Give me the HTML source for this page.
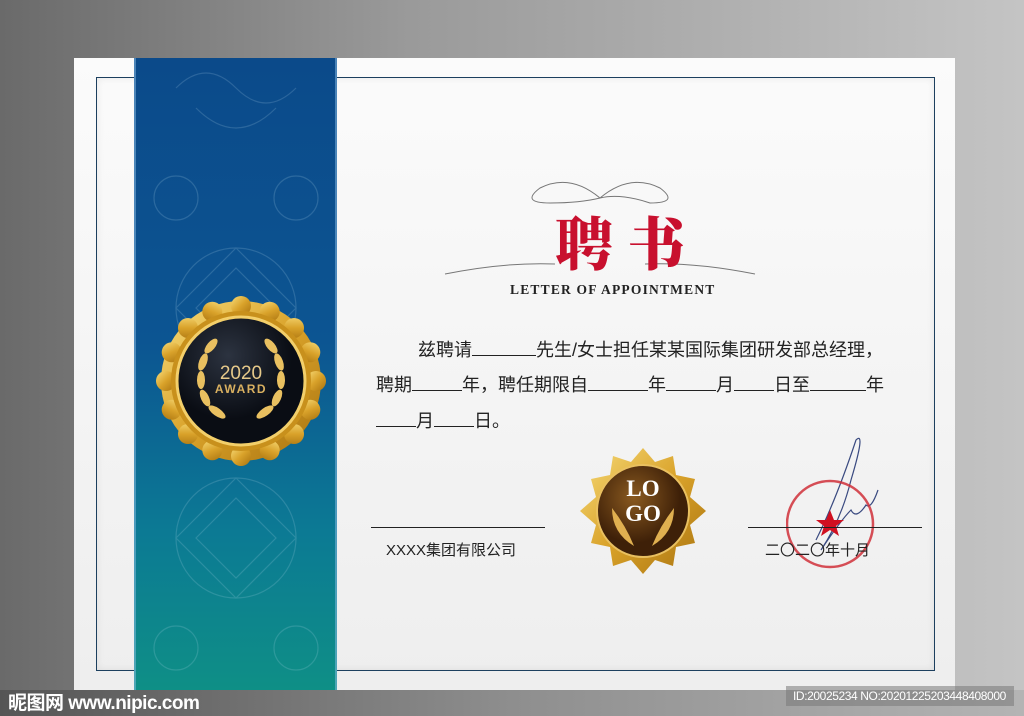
<!DOCTYPE html>
<html><head><meta charset="utf-8"><style>
*{margin:0;padding:0;box-sizing:border-box}
body{width:1024px;height:716px;overflow:hidden;position:relative;background:linear-gradient(90deg,#6a6a6a 0%,#9a9a9a 40%,#c4c4c4 100%);font-family:"Liberation Sans","Noto Sans CJK SC",sans-serif}
.paper{position:absolute;left:74px;top:58px;width:881px;height:632px;background:linear-gradient(180deg,#fbfbfb,#eeeeee)}
.border{position:absolute;left:96px;top:77px;width:839px;height:594px;border:1.5px solid #1c3f5e;box-shadow:inset 0 0 8px rgba(0,0,0,.08)}
.rib{position:absolute;left:134px;top:58px;width:203px;height:632px;background:linear-gradient(180deg,#0b4a8a 0%,#0c5592 45%,#0c7a94 75%,#0e8f86 100%);border-left:2px solid rgba(140,190,230,.5);border-right:2px solid rgba(140,190,230,.5)}
.bottom{position:absolute;left:0;top:690px;width:1024px;height:26px;background:linear-gradient(90deg,#555,#8e8e8e 50%,#b4b4b4)}
.t{position:absolute;color:#222;font-size:18px;white-space:nowrap}
u{text-decoration:none;display:inline-block;border-bottom:1px solid #222;height:14px;vertical-align:baseline}
</style></head><body>
<div class="paper"></div>
<div class="border"></div>
<div class="rib">
<svg width="199" height="632" style="opacity:.18">
<g fill="none" stroke="#bde" stroke-width="1.2">
<path d="M40 30 q30 -30 60 0 q30 30 60 0 M60 50 q40 40 80 0"/>
<circle cx="100" cy="250" r="60"/><path d="M100 190 l60 60 -60 60 -60 -60z M100 210 l40 40 -40 40 -40 -40z"/>
<circle cx="40" cy="140" r="22"/><circle cx="160" cy="140" r="22"/>
<circle cx="100" cy="480" r="60"/><path d="M100 420 l60 60 -60 60 -60 -60z M100 440 l40 40 -40 40 -40 -40z"/>
<circle cx="40" cy="590" r="22"/><circle cx="160" cy="590" r="22"/>
</g></svg>
</div>
<!-- award medal -->
<svg style="position:absolute;left:155px;top:296px" width="172" height="170" viewBox="0 0 172 170">
<defs><linearGradient id="g" x1="0" y1="0" x2="1" y2="1"><stop offset="0" stop-color="#f7dc7a"/><stop offset=".5" stop-color="#d9a22a"/><stop offset="1" stop-color="#a8720f"/></linearGradient>
<radialGradient id="b" cx=".4" cy=".3"><stop offset="0" stop-color="#2c3340"/><stop offset="1" stop-color="#0a0d14"/></radialGradient></defs>
<g fill="url(#g)"><circle cx="86" cy="85" r="80"/>
<g id="sc"><circle cx="86" cy="10" r="10"/><circle cx="86" cy="160" r="10"/><circle cx="11" cy="85" r="10"/><circle cx="161" cy="85" r="10"/></g>
<use href="#sc" transform="rotate(22.5 86 85)"/><use href="#sc" transform="rotate(45 86 85)"/><use href="#sc" transform="rotate(67.5 86 85)"/></g>
<circle cx="86" cy="85" r="70" fill="#c8901c"/>
<circle cx="86" cy="85" r="64" fill="url(#b)" stroke="#f3cf6a" stroke-width="3"/>
<g fill="#e9c060">
<ellipse cx="56" cy="50" rx="4" ry="9" transform="rotate(40 56 50)"/><ellipse cx="48" cy="66" rx="4" ry="9" transform="rotate(20 48 66)"/><ellipse cx="46" cy="84" rx="4" ry="9"/><ellipse cx="50" cy="102" rx="4" ry="9" transform="rotate(-25 50 102)"/><ellipse cx="62" cy="116" rx="4" ry="10" transform="rotate(-55 62 116)"/>
<ellipse cx="116" cy="50" rx="4" ry="9" transform="rotate(-40 116 50)"/><ellipse cx="124" cy="66" rx="4" ry="9" transform="rotate(-20 124 66)"/><ellipse cx="126" cy="84" rx="4" ry="9"/><ellipse cx="122" cy="102" rx="4" ry="9" transform="rotate(25 122 102)"/><ellipse cx="110" cy="116" rx="4" ry="10" transform="rotate(55 110 116)"/></g>
<text x="86" y="83" text-anchor="middle" fill="#e6c98a" font-size="19" font-family="Liberation Sans">2020</text>
<text x="86" y="97" text-anchor="middle" fill="#d9b060" font-size="12" font-weight="bold" letter-spacing="1.5" font-family="Liberation Sans">AWARD</text>
</svg>
<!-- title -->
<svg style="position:absolute;left:440px;top:168px" width="320" height="110">
<g fill="none" stroke="#777" stroke-width="1"><path d="M160 30 q-30 -25 -60 -10 q-20 15 10 15 q30 0 50 -5 q20 -5 50 5 q30 0 10 -15 q-30 -15 -60 10z"/><path d="M5 108 q60 -12 110 -10 M315 108 q-60 -12 -110 -10" transform="translate(0,-2)"/></g></svg>
<div class="t" style="left:555px;top:214px;font-family:'Liberation Serif','Noto Serif CJK SC',serif;font-size:58px;font-weight:900;color:#c8102e;letter-spacing:14px;line-height:64px">聘书</div>
<div class="t" style="left:510px;top:282px;font-family:'Liberation Serif',serif;font-size:13.5px;font-weight:bold;letter-spacing:1.2px">LETTER OF APPOINTMENT</div>
<div class="t" style="left:418px;top:336px">兹聘请<u style="width:64px"></u>先生/女士担任某某国际集团研发部总经理，</div>
<div class="t" style="left:376px;top:371px">聘期<u style="width:50px"></u>年，聘任期限自<u style="width:60px"></u>年<u style="width:50px"></u>月<u style="width:40px"></u>日至<u style="width:56px"></u>年</div>
<div class="t" style="left:376px;top:407px"><u style="width:40px"></u>月<u style="width:40px"></u>日。</div>
<div style="position:absolute;left:371px;top:527px;width:174px;border-top:1px solid #222"></div>
<div class="t" style="left:386px;top:539px;font-size:15px">XXXX集团有限公司</div>
<!-- logo seal -->
<svg style="position:absolute;left:580px;top:448px" width="126" height="126" viewBox="0 0 126 126">
<defs><radialGradient id="lb" cx=".4" cy=".35"><stop offset="0" stop-color="#8a5a20"/><stop offset="1" stop-color="#3e2008"/></radialGradient></defs>
<polygon fill="url(#g)" points="63,0 75,14 93,8 96,27 115,31 110,49 126,63 110,77 115,95 96,99 93,118 75,112 63,126 51,112 33,118 30,99 11,95 16,77 0,63 16,49 11,31 30,27 33,8 51,14"/>
<circle cx="63" cy="63" r="46" fill="url(#lb)" stroke="#e9c060" stroke-width="2"/>
<text x="63" y="48" text-anchor="middle" fill="#fff" font-size="23" font-weight="bold" font-family="Liberation Serif">LO</text>
<text x="63" y="73" text-anchor="middle" fill="#fff" font-size="23" font-weight="bold" font-family="Liberation Serif">GO</text>
<path d="M32 60 q0 25 22 38 q-8 -20 -22 -38z M94 60 q0 25 -22 38 q8 -20 22 -38z" fill="#e0b050"/>
</svg>
<!-- stamp -->
<svg style="position:absolute;left:786px;top:430px" width="110" height="150">
<path d="M30 110 q20 -40 40 -100 q10 -10 -5 40 q-10 40 -30 70 q20 -30 30 -40 q5 10 15 -5 q5 5 12 -15" fill="none" stroke="#3a4a80" stroke-width="1.2"/>
<circle cx="44" cy="94" r="43" fill="none" stroke="#d0303a" stroke-width="2.5" opacity=".85"/>
<polygon points="44,80 48,90 58,90 50,96 53,106 44,100 35,106 38,96 30,90 40,90" fill="#d01020"/>
</svg>
<div style="position:absolute;left:748px;top:527px;width:174px;border-top:1px solid #222"></div>
<div class="t" style="left:765px;top:539px;font-size:15px">二〇二〇年十月</div>
<div class="bottom"></div>
<div class="t" style="left:8px;top:688px;color:#fff;font-size:19px;font-weight:bold;letter-spacing:-.5px">昵图网 www.nipic.com</div>
<div style="position:absolute;left:786px;top:686px;width:228px;height:20px;background:rgba(120,120,120,.55)"></div>
<div class="t" style="left:793px;top:689px;color:#fff;font-size:12px;letter-spacing:-.4px">ID:20025234 NO:20201225203448408000</div>
</body></html>
